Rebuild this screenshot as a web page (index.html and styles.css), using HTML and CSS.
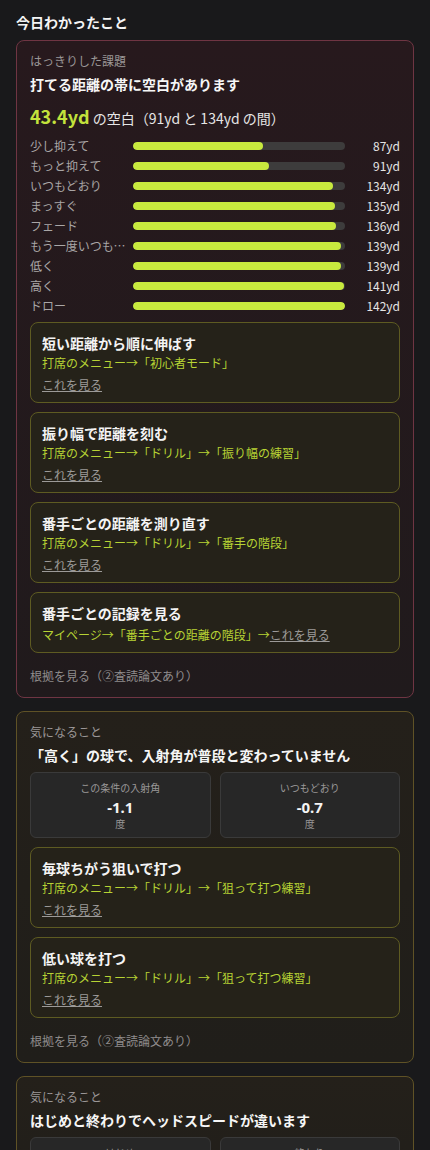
FILE: index.html
```html
<!DOCTYPE html>
<html lang="ja">
<head>
<meta charset="utf-8">
<title>今日わかったこと</title>
<link rel="stylesheet" href="styles.css">
</head>
<body>
<main class="page">
  <h2 class="page-title">今日わかったこと</h2>

  <section class="card card-issue">
    <div class="card-kicker">はっきりした課題</div>
    <h3 class="card-title">打てる距離の帯に空白があります</h3>
    <div class="gap-line"><span class="gap-big">43.4yd</span> の空白（91yd と 134yd の間）</div>
    <div class="bars">
      <div class="bar-label">少し抑えて</div><div class="bar-track"><div class="bar-fill" style="width:61.3%"></div></div><div class="bar-val">87yd</div>
      <div class="bar-label">もっと抑えて</div><div class="bar-track"><div class="bar-fill" style="width:64.1%"></div></div><div class="bar-val">91yd</div>
      <div class="bar-label">いつもどおり</div><div class="bar-track"><div class="bar-fill" style="width:94.4%"></div></div><div class="bar-val">134yd</div>
      <div class="bar-label">まっすぐ</div><div class="bar-track"><div class="bar-fill" style="width:95.1%"></div></div><div class="bar-val">135yd</div>
      <div class="bar-label">フェード</div><div class="bar-track"><div class="bar-fill" style="width:95.8%"></div></div><div class="bar-val">136yd</div>
      <div class="bar-label">もう一度いつもどおり</div><div class="bar-track"><div class="bar-fill" style="width:97.9%"></div></div><div class="bar-val">139yd</div>
      <div class="bar-label">低く</div><div class="bar-track"><div class="bar-fill" style="width:97.9%"></div></div><div class="bar-val">139yd</div>
      <div class="bar-label">高く</div><div class="bar-track"><div class="bar-fill" style="width:99.3%"></div></div><div class="bar-val">141yd</div>
      <div class="bar-label">ドロー</div><div class="bar-track"><div class="bar-fill" style="width:100%"></div></div><div class="bar-val">142yd</div>
    </div>

    <div class="tips">
      <div class="tip">
        <div class="tip-title">短い距離から順に伸ばす</div>
        <div class="tip-path">打席のメニュー→「初心者モード」</div>
        <a class="tip-link" href="#">これを見る</a>
      </div>
      <div class="tip">
        <div class="tip-title">振り幅で距離を刻む</div>
        <div class="tip-path">打席のメニュー→「ドリル」→「振り幅の練習」</div>
        <a class="tip-link" href="#">これを見る</a>
      </div>
      <div class="tip">
        <div class="tip-title">番手ごとの距離を測り直す</div>
        <div class="tip-path">打席のメニュー→「ドリル」→「番手の階段」</div>
        <a class="tip-link" href="#">これを見る</a>
      </div>
      <div class="tip">
        <div class="tip-title">番手ごとの記録を見る</div>
        <div class="tip-path tip-path-last">マイページ→「番手ごとの距離の階段」→<a class="tip-link-inline" href="#">これを見る</a></div>
      </div>
    </div>
    <div class="evidence">根拠を見る（②査読論文あり）</div>
  </section>

  <section class="card card-watch">
    <div class="card-kicker">気になること</div>
    <h3 class="card-title">「高く」の球で、入射角が普段と変わっていません</h3>
    <div class="stats">
      <div class="stat">
        <div class="stat-label">この条件の入射角</div>
        <div class="stat-value">-1.1</div>
        <div class="stat-unit">度</div>
      </div>
      <div class="stat">
        <div class="stat-label">いつもどおり</div>
        <div class="stat-value">-0.7</div>
        <div class="stat-unit">度</div>
      </div>
    </div>
    <div class="tips">
      <div class="tip">
        <div class="tip-title">毎球ちがう狙いで打つ</div>
        <div class="tip-path">打席のメニュー→「ドリル」→「狙って打つ練習」</div>
        <a class="tip-link" href="#">これを見る</a>
      </div>
      <div class="tip">
        <div class="tip-title">低い球を打つ</div>
        <div class="tip-path">打席のメニュー→「ドリル」→「狙って打つ練習」</div>
        <a class="tip-link" href="#">これを見る</a>
      </div>
    </div>
    <div class="evidence">根拠を見る（②査読論文あり）</div>
  </section>

  <section class="card card-watch">
    <div class="card-kicker">気になること</div>
    <h3 class="card-title">はじめと終わりでヘッドスピードが違います</h3>
    <div class="stats">
      <div class="stat">
        <div class="stat-label">はじめ</div>
        <div class="stat-value">38.2</div>
        <div class="stat-unit">m/s</div>
      </div>
      <div class="stat">
        <div class="stat-label">終わり</div>
        <div class="stat-value">36.5</div>
        <div class="stat-unit">m/s</div>
      </div>
    </div>
  </section>
</main>
</body>
</html>
```

FILE: styles.css
```css
* { box-sizing: border-box; }
html, body {
  margin: 0;
  padding: 0;
  background: #19191b;
}
body {
  font-family: "Noto Sans CJK JP", "Noto Sans", sans-serif;
  color: #f2f2f2;
}
.page {
  padding: 12px 16px 40px;
}
.page-title {
  margin: 0 0 8px;
  font-size: 14px;
  line-height: 20px;
  font-weight: 700;
  color: #f4f4f4;
}
.card {
  border-radius: 8px;
  padding: 11px 13px 12px;
  margin-bottom: 13px;
}
.card-issue {
  border: 1px solid #6f3543;
  background: linear-gradient(180deg, #27191d 0%, #201a1c 100%);
}
.card-watch {
  border: 1px solid #5f5226;
  background: linear-gradient(180deg, #24201a 0%, #201e1a 100%);
}
.card-kicker {
  font-size: 12px;
  line-height: 18px;
  color: #9a9696;
}
.card-title {
  margin: 4px 0 0;
  font-size: 14px;
  line-height: 20px;
  font-weight: 700;
  color: #f6f6f6;
}
.gap-line {
  margin-top: 9px;
  font-size: 14px;
  line-height: 26px;
  color: #e6e6e6;
}
.gap-big {
  font-size: 18px;
  font-weight: 700;
  color: #c3e23c;
}
.bars {
  margin-top: 5px;
  display: grid;
  grid-template-columns: 100px 1fr 52px;
  grid-auto-rows: 20px;
  column-gap: 3px;
  align-items: center;
}
.bar-label {
  font-size: 12px;
  line-height: 20px;
  color: #a9a6a6;
  white-space: nowrap;
  overflow: hidden;
  text-overflow: ellipsis;
}
.bar-track {
  height: 8px;
  border-radius: 4px;
  background: #3d3c3c;
  overflow: hidden;
}
.bar-fill {
  height: 100%;
  border-radius: 4px;
  background: #c8ea3e;
}
.bar-val {
  font-size: 12px;
  line-height: 20px;
  text-align: right;
  color: #e4e4e4;
}
.tips {
  margin-top: 6px;
  display: flex;
  flex-direction: column;
  gap: 9px;
}
.card-watch .tips { margin-top: 9px; }
.tip {
  border: 1px solid #5e5b22;
  background: #252219;
  border-radius: 8px;
  padding: 10px 11px 7px;
}
.tip-title {
  font-size: 14px;
  line-height: 20px;
  font-weight: 700;
  color: #f4f4f4;
}
.tip-path {
  font-size: 12px;
  line-height: 20px;
  color: #b7d334;
}
.tip-path-last {
  margin-top: 2px;
}
.tip-link {
  display: block;
  width: fit-content;
  margin-top: 2px;
  font-size: 12px;
  line-height: 20px;
  color: #9c9a98;
  text-decoration: underline;
}
.tip-link-inline {
  color: #9c9a98;
  text-decoration: underline;
}
.evidence {
  margin-top: 14px;
  font-size: 12px;
  line-height: 18px;
  color: #8f8c8c;
}
.stats {
  margin-top: 7px;
  display: grid;
  grid-template-columns: 1fr 1fr;
  gap: 9px;
}
.stat {
  background: #272727;
  border: 1px solid #3a3a3a;
  border-radius: 6px;
  padding: 8px 6px 6px;
  text-align: center;
}
.stat-label {
  font-size: 10px;
  line-height: 14px;
  color: #9a9898;
}
.stat-value {
  margin-top: 2px;
  font-family: "Noto Sans", "Noto Sans CJK JP", sans-serif;
  font-size: 15px;
  line-height: 20px;
  font-weight: 700;
  color: #f4f4f4;
}
.stat-unit {
  font-size: 10px;
  line-height: 14px;
  color: #9a9898;
}
```
